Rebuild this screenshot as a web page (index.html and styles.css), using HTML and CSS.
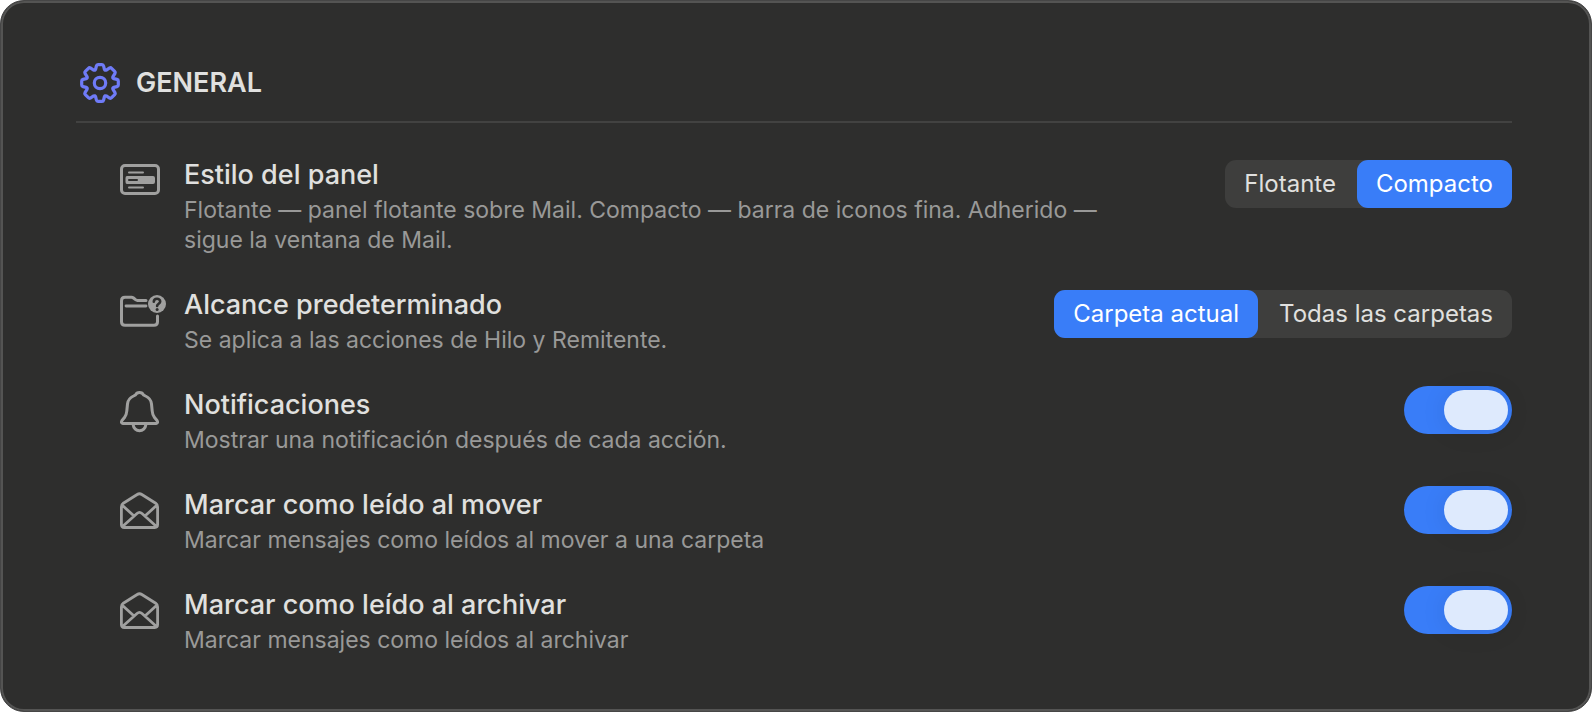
FILE: index.html
```html
<!DOCTYPE html>
<html lang="es">
<head>
<meta charset="utf-8">
<meta name="viewport" content="width=device-width, initial-scale=1">
<title>General</title>
<link rel="stylesheet" href="styles.css">
</head>
<body>
<main class="panel">
  <header class="panel-header">
    <svg class="gear" viewBox="-20 -20 40 40" aria-hidden="true">
      <defs><path id="quarter" d="M0-18.3H2Q3.3-18.3 3.6-17L4.4-13.8Q4.9-12.2 6.4-13L9.6-15Q10.7-15.6 11.6-14.7L14.7-11.6Q15.6-10.7 15-9.6L13-6.4Q12.2-4.9 13.8-4.4L17-3.6Q18.3-3.3 18.3-2V0"/></defs>
      <use href="#quarter"/>
      <use href="#quarter" transform="rotate(90)"/>
      <use href="#quarter" transform="rotate(180)"/>
      <use href="#quarter" transform="rotate(270)"/>
      <circle r="5.7"/>
    </svg>
    <h1 class="panel-title">GENERAL</h1>
  </header>

  <div class="rows">
    <section class="row">
      <svg class="icon" viewBox="0 0 48 44" aria-hidden="true">
        <rect x="1.5" y="9.5" width="37" height="28" rx="3.5"/>
        <path class="thin" d="M9 16.5H23M9 31.5H23"/>
        <path class="solid" d="M7 20H33Q35 20 35 22V26Q35 28 33 28H7Q5.5 28 5.5 26V22Q5.5 20 7 20ZM9 23Q8 23 8 24T9 25H17Q18 25 18 24T17 23Z" fill-rule="evenodd"/>
      </svg>
      <div class="text">
        <h2 class="name" id="style-name">Estilo del panel</h2>
        <p class="hint">Flotante — panel flotante sobre Mail. Compacto — barra de iconos fina. Adherido — sigue la ventana de Mail.</p>
      </div>
      <div class="segments" role="radiogroup" aria-labelledby="style-name">
        <label class="segment"><input class="segment-input" type="radio" name="style"><span>Flotante</span></label>
        <label class="segment"><input class="segment-input" type="radio" name="style" checked><span>Compacto</span></label>
      </div>
    </section>

    <section class="row">
      <svg class="icon" viewBox="0 0 48 44" aria-hidden="true">
        <path d="M26 14.5H17.5Q16.5 14.5 15.5 13.7L13.5 12Q12.5 11.2 11.5 11.2H5Q1.5 11.2 1.5 14.7V35.7Q1.5 39.2 5 39.2H34Q37.5 39.2 37.500 35.7V30"/>
        <path class="medium" d="M6 20H26"/>
        <circle class="solid" cx="37" cy="18" r="9"/>
        <path class="mark" d="M33.8 15.8C33.8 11.8 40.2 11.8 40.2 15.5C40.2 17.7 37.1 17.7 37.1 20"/>
        <circle class="dot" cx="37.1" cy="23.4" r="1.5"/>
      </svg>
      <div class="text">
        <h2 class="name" id="scope-name">Alcance predeterminado</h2>
        <p class="hint">Se aplica a las acciones de Hilo y Remitente.</p>
      </div>
      <div class="segments" role="radiogroup" aria-labelledby="scope-name">
        <label class="segment"><input class="segment-input" type="radio" name="scope" checked><span>Carpeta actual</span></label>
        <label class="segment"><input class="segment-input" type="radio" name="scope"><span>Todas las carpetas</span></label>
      </div>
    </section>

    <section class="row">
      <svg class="icon bell" viewBox="0 0 48 48" aria-hidden="true">
        <path d="M3 37.5H36Q38.5 37 37 34.5L34.5 31.5Q32.5 29 32.2 25L31.5 18Q31 12.5 25.5 10L23.5 9Q22.5 6.5 19.5 6.5T15.5 9L13.5 10Q8 12.5 7.5 18L6.8 25Q6.5 29 4.5 31.5L2 34.5Q.5 37 3 37.5Z"/>
        <path d="M13 38C14 47 25 47 26 38"/>
      </svg>
      <div class="text">
        <h2 class="name"><label for="notify">Notificaciones</label></h2>
        <p class="hint">Mostrar una notificación después de cada acción.</p>
      </div>
      <input class="switch" type="checkbox" role="switch" id="notify" checked>
    </section>

    <section class="row">
      <svg class="icon" viewBox="0 0 48 44" aria-hidden="true">
        <path class="medium" d="M1.4 21Q1.4 18.5 3.3 17.2L17.2 8.5Q19.5 7 21.800 8.5L35.7 17.2Q37.6 18.5 37.6 21V38.5Q37.6 41.5 34.7 41.5H4.3Q1.4 41.5 1.4 38.5ZM2.5 19.5L13.5 29.5M36.5 19.5L25.5 29.5M2.5 40.5L17 27.5Q19.5 25.3 22 27.5L36.5 40.5"/>
      </svg>
      <div class="text">
        <h2 class="name"><label for="read-move">Marcar como leído al mover</label></h2>
        <p class="hint">Marcar mensajes como leídos al mover a una carpeta</p>
      </div>
      <input class="switch" type="checkbox" role="switch" id="read-move" checked>
    </section>

    <section class="row">
      <svg class="icon" viewBox="0 0 48 44" aria-hidden="true">
        <path class="medium" d="M1.4 21Q1.4 18.5 3.3 17.2L17.2 8.5Q19.5 7 21.800 8.5L35.7 17.2Q37.6 18.5 37.6 21V38.5Q37.6 41.5 34.7 41.5H4.3Q1.4 41.5 1.4 38.5ZM2.5 19.5L13.5 29.5M36.5 19.5L25.5 29.5M2.5 40.5L17 27.5Q19.5 25.3 22 27.5L36.5 40.5"/>
      </svg>
      <div class="text">
        <h2 class="name"><label for="read-archive">Marcar como leído al archivar</label></h2>
        <p class="hint">Marcar mensajes como leídos al archivar</p>
      </div>
      <input class="switch" type="checkbox" role="switch" id="read-archive" checked>
    </section>
  </div>
</main>
</body>
</html>
```

FILE: styles.css
```css
* { box-sizing: border-box; }

body {
  margin: 0;
  background: #fff;
  color: #e0e0df;
  font-family: Inter, "Liberation Sans", sans-serif;
}

.panel {
  min-height: 100vh;
  padding: 62px 79px 40px 75px;
  border: 1px solid #464646;
  border-radius: 24px;
  background: #2e2e2d;
  box-shadow: inset 0 0 0 2px #545453;
}

.panel-header {
  display: flex;
  align-items: center;
  gap: 16px;
  padding: 0 4px 18px;
  border-bottom: 2px solid #424241;
}

.gear {
  width: 40px;
  height: 40px;
  fill: none;
  stroke: #6f7bf7;
  stroke-width: 3.2;
}

.panel-title {
  margin: 0;
  font-size: 27px;
  font-weight: 600;
  line-height: 38px;
}

.rows {
  display: flex;
  flex-direction: column;
  gap: 31px;
  padding: 33px 0 0 44px;
}

.row {
  display: flex;
  align-items: flex-start;
}

.icon {
  flex: none;
  width: 48px;
  height: 44px;
  margin-right: 16px;
  fill: none;
  stroke: #a0a09f;
  stroke-width: 3;
  stroke-linecap: round;
  stroke-linejoin: round;
}

.bell { height: 48px; }
.icon .thin { stroke-width: 2; }
.icon .medium { stroke-width: 2.8; }
.icon .solid { fill: #a0a09f; stroke: none; }
.icon .mark { stroke: #2e2e2d; stroke-width: 2.6; }
.icon .dot { fill: #2e2e2d; stroke: none; }

.text {
  flex: 1;
  min-width: 0;
  padding-right: 72px;
}

.name {
  margin: 0 0 1px;
  font-size: 27px;
  font-weight: 500;
  line-height: 38px;
}

.hint {
  margin: 0;
  color: #999998;
  font-size: 23px;
  line-height: 30px;
}

.segments {
  display: flex;
  flex: none;
  gap: 2px;
  margin-top: 4px;
  border-radius: 11px;
  background: #3e3e3d;
}

.segment {
  padding: 0 19px;
  border-radius: 11px;
  font-size: 24px;
  line-height: 48px;
  cursor: pointer;
}

.segment:has(:checked) {
  background: #397df8;
  color: #fff;
}

.segment-input {
  position: absolute;
  margin: 0;
  appearance: none;
}

.switch {
  appearance: none;
  flex: none;
  display: flex;
  width: 108px;
  height: 48px;
  margin: 0;
  padding: 4px;
  border-radius: 24px;
  background: #5a5a59;
  cursor: pointer;
}

.switch::before {
  content: "";
  width: 64px;
  height: 40px;
  border-radius: 20px;
  background: #deeafd;
  box-shadow: 0 2px 24px rgb(0 0 0 / 10%);
}

.switch:checked {
  justify-content: flex-end;
  background: #397df8;
}
```
